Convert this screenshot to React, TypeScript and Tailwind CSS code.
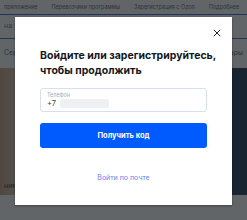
import { X } from "lucide-react";

export default function App() {
  return (
    <div className="relative w-[247px] h-[220px] overflow-hidden bg-white font-['Inter',sans-serif]">
      {/* page behind */}
      <div className="flex flex-col h-full">
        <div className="h-[14px] flex items-center gap-[14px] px-1 text-[5.5px] text-gray-600 whitespace-nowrap">
          <span>приложение</span>
          <span>Перевозчики программы</span>
          <span>Зарегистрация с Ozon</span>
          <span>Подробнее</span>
        </div>
        <div className="h-[1px] bg-[#2f5bd0]" />
        <div className="h-[23px] flex items-center px-1 text-[7px] text-gray-500">на ч</div>
        <div className="h-[1px] bg-[#2f5bd0]" />
        <div className="h-[29px] flex items-center justify-between px-1 text-[7px] text-gray-600">
          <span>Сер</span>
          <span>зары</span>
        </div>
        <div className="h-[127px] flex">
          <div className="w-[60px] bg-gradient-to-r from-[#c99a7a] via-[#d8d6c8] to-[#d8d8cc] flex items-end p-1 text-[7px] text-gray-800">
            ния
          </div>
          <div className="flex-1 bg-[#e9ecef]" />
          <div className="w-[50px] bg-[#0c2644]" />
        </div>
        <div className="flex-1 bg-white" />
      </div>
      {/* overlay */}
      <div className="absolute inset-0 bg-[#1e2428]/70" />
      {/* modal */}
      <div className="absolute left-[15px] top-[17px] w-[217px] h-[188px] bg-white shadow-[0_1px_2px_rgba(0,0,0,0.35)] flex flex-col px-[25px]">
        <div className="flex justify-end mr-[-16px] mt-[10px] h-[12px]">
          <X size={12} strokeWidth={2} className="text-[#1f2430]" />
        </div>
        <h2 className="mt-[9px] text-[10.5px] leading-[15px] font-bold text-[#14171c] whitespace-nowrap">
          Войдите или зарегистрируйтесь,
          <br />
          чтобы продолжить
        </h2>
        <div className="mt-[10px] h-[24px] border border-[#d5e1f2] rounded-[3px] flex flex-col justify-center px-[6px]">
          <span className="text-[5.5px] leading-[7px] text-[#a4adba]">Телефон</span>
          <div className="flex items-center gap-[4px]">
            <span className="text-[7.5px] leading-[10px] text-[#3c4350]">+7</span>
            <div className="w-[49px] h-[9px] bg-[#eef0f3] rounded-[2px]" />
          </div>
        </div>
        <button className="mt-[11px] h-[25px] rounded-[3px] bg-[#005bff] text-white text-[7.5px] font-bold">
          Получить код
        </button>
        <button className="mt-[25px] text-[7px] text-[#6b82f0]">Войти по почте</button>
      </div>
    </div>
  );
}
